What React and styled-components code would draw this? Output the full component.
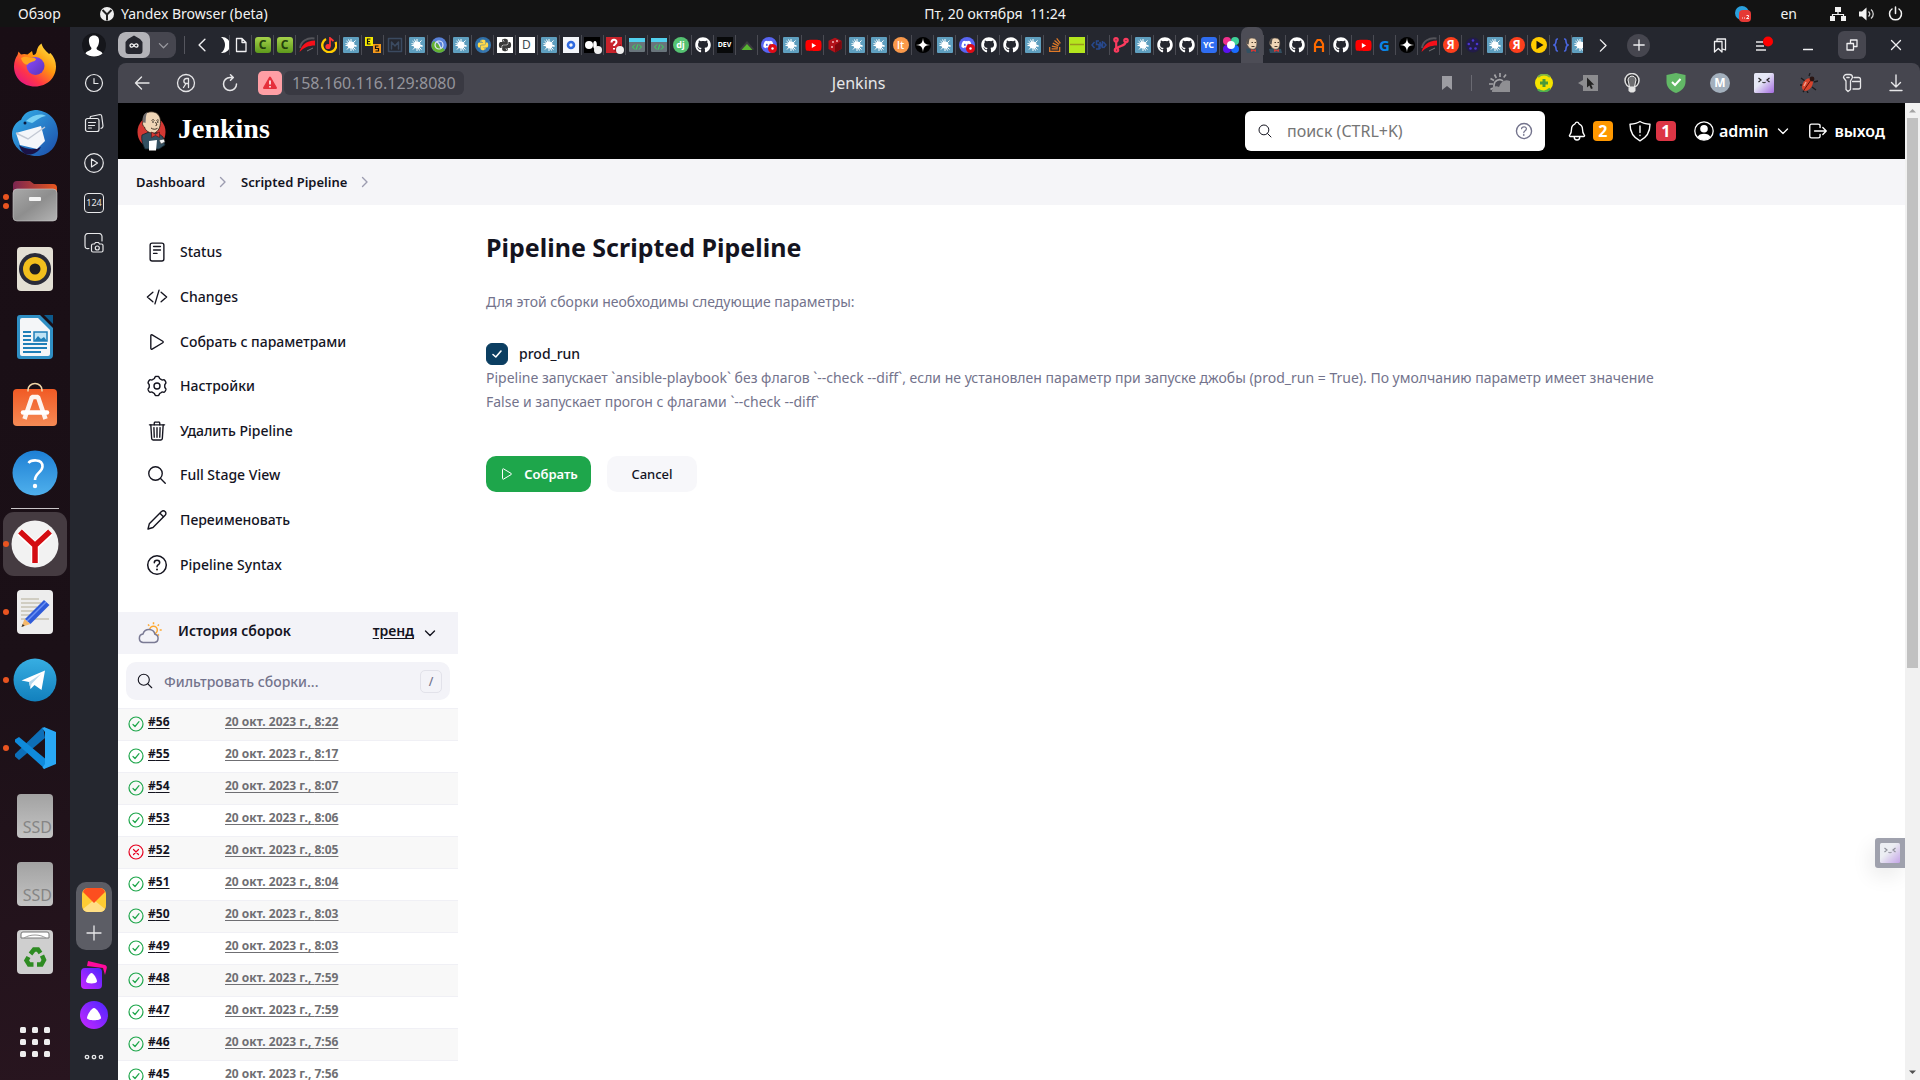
import React from "react";
import styled, { createGlobalStyle, css } from "styled-components";
import { FaGithub, FaYoutube, FaDiscord, FaStackOverflow, FaPython } from "react-icons/fa";
import {
  IoReaderOutline, IoCodeSlashOutline, IoPlayOutline, IoTrashOutline, IoSearchOutline,
  IoHelpCircleOutline, IoNotificationsOutline, IoLogOutOutline,
} from "react-icons/io5";

const UI_FONT = '"Noto Sans", "Open Sans", sans-serif';

const GlobalStyle = createGlobalStyle`
  *, *::before, *::after { box-sizing: border-box; }
  body { margin: 0; font-family: ${UI_FONT}; font-size: 14px; color: #14141f; }
  button, input { font-family: inherit; }
  button { border: 0; padding: 0; background: none; color: inherit; }
  a { color: inherit; text-decoration: none; }
  svg { display: block; flex: none; }
`;

/* ---------- desktop ---------- */

const Desktop = styled.div`
  height: 100vh;
  display: flex;
  flex-direction: column;
  overflow: hidden;
  background: #25272f;
`;

const SystemBar = styled.header`
  flex: none;
  height: 27px;
  display: grid;
  grid-template-columns: 70px 1fr auto 1fr;
  align-items: center;
  background: #131313;
  color: #f2f2f2;
  line-height: 27px;
  white-space: pre;
`;
const Overview = styled.button`
  padding-left: 18px;
  text-align: left;
  font-size: 14px;
  white-space: nowrap;
`;
const ActiveApp = styled.span`
  display: flex;
  align-items: center;
  gap: 7px;
  padding-left: 30px;
`;
const Indicators = styled.div`
  display: flex;
  justify-content: flex-end;
  align-items: center;
  padding-right: 17px;
  gap: 13px;
`;
const Layout = styled.span`
  padding: 0 20px 0 16px;
`;

const Body = styled.div`
  flex: 1;
  min-height: 0;
  display: flex;
`;

const Dock = styled.nav`
  flex: none;
  width: 70px;
  display: flex;
  flex-direction: column;
  justify-content: space-between;
  padding: 4px 0;
  background: linear-gradient(170deg, #190e15 0%, #1b1017 60%, #28151f 100%);
`;
const DockList = styled.div`
  display: flex;
  flex-direction: column;
`;
const DockButton = styled.button`
  height: 68px;
  width: 100%;
  display: grid;
  grid-template-columns: 3px 64px 3px;
  align-items: center;
`;
const DockTile = styled.span`
  grid-column: 2;
  grid-row: 1;
  width: 64px;
  height: 64px;
  border-radius: 11px;
  display: grid;
  place-items: center;
  background: ${(p) => (p.$active ? "#453b41" : "transparent")};
`;
const DockDots = styled.span`
  grid-column: 2;
  grid-row: 1;
  z-index: 1;
  justify-self: start;
  display: flex;
  flex-direction: column;
  gap: 3px;
`;
const Dot = styled.i`
  width: 6px;
  height: 6px;
  border-radius: 3px;
  background: #e95420;
`;
const DockRule = styled.hr`
  width: 48px;
  height: 1px;
  margin: 1px auto;
  border: 0;
  background: #c9c5c7;
`;

/* ---------- browser ---------- */

const BrowserSide = styled.nav`
  flex: none;
  width: 48px;
  display: flex;
  flex-direction: column;
  align-items: center;
  justify-content: space-between;
  color: #e8e8ea;
`;
const SideGroup = styled.div`
  display: flex;
  flex-direction: column;
  align-items: center;
`;
const SideButton = styled.button`
  width: 36px;
  height: ${(p) => p.$h || 40}px;
  display: grid;
  place-items: center;
`;
const SideCard = styled.div`
  width: 36px;
  height: 68px;
  display: flex;
  flex-direction: column;
  align-items: center;
  border-radius: 10px;
  background: #5c5d65;
  margin-bottom: 4px;
`;
const BrowserMain = styled.div`
  flex: 1;
  min-width: 0;
  display: flex;
  flex-direction: column;
`;
const TabBar = styled.div`
  flex: none;
  height: 36px;
  display: flex;
  align-items: center;
  color: #f0f0f2;
`;
const TabGroup = styled.div`
  display: flex;
  width: 58px;
  height: 26px;
  border-radius: 8px;
  overflow: hidden;
  background: #46464f;
`;
const GroupPart = styled.button`
  flex: ${(p) => (p.$main ? "0 0 32px" : "1")};
  display: grid;
  place-items: center;
  border-radius: 7px;
  background: ${(p) => (p.$main ? "#b3b3b8" : "transparent")};
`;
const BarRule = styled.span`
  width: 1px;
  height: 18px;
  margin: 0 9px 0 8px;
  background: #55565e;
`;
const Arrow = styled.button`
  width: 16px;
  height: 24px;
  margin-left: ${(p) => p.$before || 0}px;
  display: grid;
  place-items: center;
`;
const Tabs = styled.div`
  display: flex;
  align-self: stretch;
  align-items: center;
  margin-left: 9px;
  overflow: hidden;
  flex: 0 1 1366px;
`;
const TabButton = styled.button`
  flex: none;
  width: ${(p) => p.$w || 22}px;
  height: 20px;
  display: grid;
  place-items: center;
  justify-content: ${(p) => (p.$clip ? p.$clip : "center")};
  overflow: hidden;
  border-left: 1px solid ${(p) => (p.$bare ? "transparent" : "#4a4b53")};
  ${(p) =>
    p.$active &&
    css`
      height: 36px;
      border-left: 0;
      border-radius: 7px 7px 0 0;
      background: #4d4d56;
    `}
`;
const NewTab = styled.button`
  width: 23px;
  height: 23px;
  margin-left: 16px;
  border-radius: 12px;
  display: grid;
  place-items: center;
  background: #46464f;
`;
const WindowTools = styled.div`
  display: flex;
  margin-left: auto;
  padding-right: 2px;
`;
const ToolButton = styled.button`
  width: 44px;
  height: ${(p) => p.$h || 36}px;
  display: grid;
  place-items: center;
`;
const RestoreFace = styled.span`
  width: 28px;
  height: 28px;
  border-radius: 6px;
  display: grid;
  place-items: center;
  background: #46464f;
`;

const Toolbar = styled.div`
  flex: none;
  height: 40px;
  display: flex;
  align-items: center;
  border-radius: 8px 8px 0 0;
  background: #46464f;
  color: #e6e6e8;
`;
const NavGroup = styled.div`
  display: flex;
  align-items: center;
  flex: 0 0 344px;
  padding-left: 2px;
`;
const Warning = styled.button`
  width: 24px;
  height: 24px;
  margin: 0 2px 0 6px;
  border-radius: 5px;
  display: grid;
  place-items: center;
  background: #ff9fa5;
`;
const Address = styled.button`
  flex: 1;
  height: 24px;
  padding: 0 8px;
  border-radius: 6px;
  background: #393942;
  color: #94949b;
  font-size: 16px;
  line-height: 24px;
  text-align: left;
`;
const PageTitle = styled.div`
  flex: 0 1 790px;
  text-align: center;
  font-size: 16px;
  line-height: 24px;
`;
const Extensions = styled.div`
  display: flex;
  align-items: center;
  margin-left: auto;
  padding-right: 2px;
`;
const ExtRule = styled.span`
  width: 1px;
  height: 16px;
  margin: 0 6px 0 2px;
  background: #6a6a72;
`;

const Viewport = styled.div`
  flex: 1;
  min-height: 0;
  display: flex;
  background: #fff;
`;
const Page = styled.div`
  flex: 1;
  min-width: 0;
  overflow: hidden;
  position: relative;
`;
const Scrollbar = styled.div`
  flex: none;
  width: 15px;
  display: flex;
  flex-direction: column;
  align-items: center;
  justify-content: space-between;
  padding: 5px 0;
  background: #f1f1f1;
`;
const ThumbColumn = styled.div`
  flex: 1;
  width: 11px;
  margin: 5px 0 3px;
`;
const Thumb = styled.div`
  height: 58%;
  background: #c1c1c1;
`;

/* ---------- Jenkins page ---------- */

const JHeader = styled.header`
  height: 56px;
  display: flex;
  align-items: center;
  padding: 0 20px 0 19px;
  background: #000;
  color: #fff;
`;
const Brand = styled.a`
  display: flex;
  align-items: center;
  gap: 12px;
  font: bold 28px/40px "Liberation Serif", serif;
  & > span { margin-bottom: 4px; }
`;
const SearchBox = styled.label`
  width: 300px;
  height: 40px;
  margin: 0 21px 0 auto;
  padding: 0 10px 0 12px;
  display: flex;
  align-items: center;
  gap: 14px;
  border-radius: 6px;
  background: #fff;
  color: #14141f;
`;
const SearchInput = styled.input`
  flex: 1;
  min-width: 0;
  border: 0;
  padding: 0;
  outline: 0;
  background: transparent;
  color: #14141f;
  font-size: ${(p) => p.$size}px;
  font-weight: ${(p) => p.$weight};
  &::placeholder { color: ${(p) => p.$hint}; opacity: 1; }
`;
const HeaderLink = styled.a`
  display: flex;
  align-items: center;
  gap: 5px;
  margin-right: ${(p) => p.$after}px;
  font-size: 16px;
  font-weight: 600;
`;
const MenuArrow = styled.span`
  margin-left: 4px;
`;
const Badge = styled.span`
  width: 20px;
  height: 20px;
  border-radius: 4px;
  text-align: center;
  font-size: 16px;
  font-weight: 700;
  line-height: 20px;
  background: ${(p) => p.$bg};
`;
const Crumbs = styled.nav`
  height: 46px;
  display: flex;
  align-items: center;
  gap: 12px;
  padding-left: 18px;
  background: #f5f5f8;
  font-size: 13px;
  font-weight: 600;
`;

const Columns = styled.div`
  display: flex;
  align-items: flex-start;
`;
const SidePanel = styled.aside`
  flex: none;
  width: 340px;
`;
const Tasks = styled.ul`
  display: grid;
  grid-auto-rows: 1fr;
  min-height: 407px;
  margin: 0;
  padding: 25px 0 25px 28px;
  list-style: none;
`;
const Task = styled.li`
  display: flex;
`;
const TaskLink = styled.a`
  display: flex;
  align-items: center;
  gap: 12px;
  font-size: 14px;
  line-height: 20px;
  font-weight: 500;
`;
const HistoryHead = styled.div`
  height: 42px;
  display: flex;
  align-items: center;
  padding: 0 22px 0 20px;
  background: #f3f3f8;
  font-size: 14px;
  font-weight: 600;
`;
const HistoryTitle = styled.h2`
  margin: 0 auto 4px 16px;
  font-size: 14px;
  line-height: 20px;
  font-weight: 600;
`;
const TrendLink = styled.a`
  margin: 0 10px 4px 0;
  line-height: 20px;
  text-decoration: underline;
  text-underline-offset: 2px;
`;
const Filter = styled.label`
  height: 38px;
  margin: 8px;
  padding: 0 8px 0 10px;
  display: flex;
  align-items: center;
  gap: 10px;
  border-radius: 10px;
  background: #f3f3f8;
`;
const Kbd = styled.kbd`
  width: 22px;
  height: 23px;
  border: 1px solid #e2e2ea;
  border-radius: 5px;
  text-align: center;
  font: 500 12px/21px ${UI_FONT};
  color: #73738c;
`;
const Builds = styled.table`
  width: 100%;
  border-collapse: collapse;
  font-size: 12px;
  font-weight: 700;
`;
const BuildRow = styled.tr`
  height: 32px;
  border-top: 1px solid #f0f0f5;
  background: ${(p) => (p.$odd ? "#f8f8f8" : "#fff")};
`;
const NumberCell = styled.td`
  width: 107px;
  padding: 0 0 2px 10px;
`;
const NumberInner = styled.div`
  display: flex;
  align-items: center;
  gap: 4px;
`;
const DateCell = styled.td`
  padding: 0 0 6px;
`;
const BuildLink = styled.a`
  color: ${(p) => (p.$muted ? "#6f6f73" : "#14141f")};
  text-decoration: underline;
  text-underline-offset: 2px;
  line-height: 20px;
  margin-bottom: ${(p) => (p.$muted ? 0 : 4)}px;
`;

const Main = styled.main`
  flex: 1;
  min-width: 0;
  padding: 27px 240px 40px 28px;
`;
const Title = styled.h1`
  margin: 0;
  font-size: 25px;
  line-height: 30px;
  font-weight: 700;
`;
const Text = styled.p`
  margin: 0;
  padding-top: ${(p) => p.$top || 0}px;
  color: #73738c;
  font-size: 14px;
  line-height: 24px;
  max-width: 1180px;
`;
const CheckRow = styled.label`
  display: flex;
  align-items: center;
  gap: 11px;
  height: 22px;
  margin-top: 29px;
  font-size: 14px;
  line-height: 20px;
  font-weight: 500;
`;
const CheckFace = styled.span`
  display: grid;
  place-items: center;
  width: 22px;
  height: 22px;
  & > * { grid-area: 1 / 1; }
  & > svg { pointer-events: none; }
`;
const Check = styled.input`
  appearance: none;
  width: 22px;
  height: 22px;
  margin: 0;
  border: 1px solid #c5c5d0;
  border-radius: 6px;
  &:checked { border-color: #0b3e61; background: #0b3e61; }
`;
const Actions = styled.div`
  display: flex;
  gap: 16px;
  margin-top: 42px;
`;
const ActionButton = styled.button`
  height: 36px;
  display: flex;
  align-items: center;
  justify-content: center;
  gap: 9px;
  border-radius: 10px;
  font-size: 13px;
  ${(p) =>
    p.$primary
      ? css`width: 105px; background: #1ea64b; color: #fff; font-weight: 600;`
      : css`width: 90px; background: #f7f7fa; color: #14141f; font-weight: 500;`}
`;
const Floating = styled.button`
  position: absolute;
  right: 0;
  bottom: 212px;
  width: 30px;
  height: 30px;
  padding-left: 5px;
  display: flex;
  align-items: center;
  border-radius: 3px 0 0 3px;
  background: #9fa1ad;
  box-shadow: -4px 8px 20px rgba(0, 0, 0, 0.08);
`;

/* ---------- drawings ---------- */

const Art = ({ w, h, box, children, ...rest }) => (
  <svg width={w} height={h || w} viewBox={box || `0 0 ${w} ${h || w}`} fill="none" aria-hidden="true" {...rest}>
    {children}
  </svg>
);
const Line = ({ w, h, box, sw = 1.2, d, children }) => (
  <Art w={w} h={h} box={box} stroke="currentColor" strokeWidth={sw} strokeLinecap="round" strokeLinejoin="round">
    {d && <path d={d} />}
    {children}
  </Art>
);
const Chevron = ({ dir = "down", size = 12, sw = 1.4, color }) => {
  const d = { down: "M1.5 4l4.5 4.5L10.5 4", right: "M3.5 1.5L8 6l-4.500 4.500", left: "M8.500 1L3.500 6l5 5" }[dir];
  return (
    <Art w={size} box="0 0 12 12" stroke={color || "currentColor"} strokeWidth={sw} strokeLinecap="round" strokeLinejoin="round">
      <path d={d} />
    </Art>
  );
};

const gearPath = (() => {
  const pts = [];
  for (let i = 0; i < 144; i += 1) {
    const a = (i / 144) * Math.PI * 2;
    const r = 8.7 + 0.95 * Math.tanh(2.2 * Math.cos(6 * a));
    pts.push(`${(11 + r * Math.sin(a)).toFixed(2)} ${(11 - r * Math.cos(a)).toFixed(2)}`);
  }
  return `M${pts.join("L")}Z`;
})();

const Gear = () => (
  <Line w={22} sw={1.4} d={gearPath}>
    <circle cx="11" cy="11" r="3" />
  </Line>
);
const Pencil = () => (
  <Line w={22} sw={1.4} d="M2 20l1.300-5.200L15.500 2.600a2.400 2.400 0 0 1 3.600 0a2.400 2.400 0 0 1 0 3.600L7 18.500 2 20zM14 4.300l3.600 3.600" />
);

const Jenkins = ({ w, h }) => (
  <Art w={w} h={h} box="0 0 29 40">
    <ellipse cx="14.500" cy="21" rx="14" ry="15.500" fill="#d33833" />
    <path d="M5 24l7-3 9 1 5 4 2 8-6 4H8c-2-4-4-9-3-14z" fill="#335061" stroke="#14232b" strokeWidth=".8" />
    <path d="M6 11C5 4 9 1 14 .8c6-.3 9.500 4 9.500 9.500 0 6-2 10-6 11.700-5 .5-9-2-10-6-1.600-.5-2.600-3.500-1.500-5z" fill="#f0d6b7" stroke="#2b2116" strokeWidth=".8" />
    <path d="M6 11c-1-5 1-8.500 4.500-9.700C8.500 4 9 8 8.500 12z" fill="#6d6b6d" />
    <path d="M14.500 9.500c1-1 2.500-1 3 0M19.500 9.500c.8-.8 1.800-.8 2.300 0M14 17c2 1.600 4.500 1.600 6.500.3M18.500 11l1.500 3-1.500.6" stroke="#2b2116" strokeWidth=".9" />
    <circle cx="16" cy="11" r=".8" fill="#111" /><circle cx="20.800" cy="11" r=".8" fill="#111" />
    <path d="M14.500 21l4 2.200 4-2.200v5.500l-4-2-4 2z" fill="#d33833" stroke="#5a1210" strokeWidth=".6" />
    <path d="M12 30l8-1-1 10.500h-7z" fill="#fff" />
    <path d="M22 29l5-1 1 3-4 2z" fill="#f5f5f5" stroke="#333" strokeWidth=".6" />
  </Art>
);

const Glyph = styled.span`
  width: 16px;
  height: 16px;
  display: grid;
  place-items: center;
  border-radius: ${(p) => p.$r || 0}px;
  background: ${(p) => p.$bg || "transparent"};
  color: ${(p) => p.$fg || "#fff"};
  font: ${(p) => p.$w || 700} ${(p) => p.$s || 10}px/16px ${UI_FONT};
`;

const Favicon = ({ kind }) => {
  switch (kind) {
    case "file":
      return <Line w={16} sw={1.300} d="M3.500 1.500h5.500l4 4v9h-9.500zM9 1.500v4h4" />;
    case "c":
      return <Glyph $bg="linear-gradient(#a5d24a, #5d9a1c)" $fg="#23400c" $r={3} $s={12}>C</Glyph>;
    case "speed":
      return (
        <Art w={16}>
          <path d="M1 11C2 4 8 .5 15.500 1.500" stroke="#55555b" strokeWidth="2" />
          <path d="M.5 15C2 9 7 3.500 16 3.500v5C9.500 8.500 5 10.500.5 15z" fill="#f5101a" />
          <path d="M8 14l6-3" stroke="#777" strokeWidth="1" />
        </Art>
      );
    case "music":
      return (
        <Art w={16}>
          <path d="M5 2A7 7 0 1 0 14.500 5" stroke="#ffcc00" strokeWidth="2.400" />
          <circle cx="7" cy="9.500" r="2.600" fill="#f33" /><path d="M9 9.500V1l3.500 3" stroke="#f33" strokeWidth="1.800" />
        </Art>
      );
    case "splat":
      return (
        <Art w={16}>
          <rect width="16" height="16" rx="1" fill="#5f9fbf" />
          <circle cx="8" cy="8" r="3.600" fill="#fff" />
          <path d="M8 2v12M2.500 8.500h11M3.500 4l9 8.500M4 12.500L12.500 3.500M5.500 2.500l5 11M2.500 6.500l11 3" stroke="#fff" strokeWidth="1" />
        </Art>
      );
    case "es":
      return (
        <Art w={16}>
          <rect width="8" height="9" fill="#f4e800" /><rect x="8" y="7" width="8" height="9" fill="#f79a1c" />
          <path d="M5.500 2H2.500v5h3M2.500 4.500h2.500M13.500 9h-3v2.500h3V14h-3" stroke="#111" strokeWidth="1.200" />
        </Art>
      );
    case "m":
      return <Line w={16} sw={1.500}><path stroke="#3b4a60" d="M1.500 1.500h13v13h-13zM4.500 12V5l3.500 4 3.500-4v7" /></Line>;
    case "clojure":
      return (
        <Art w={16}>
          <circle cx="8" cy="8" r="7.800" fill="#5881d8" /><path d="M1 11a7.800 7.800 0 0 0 13 2L8 8 3 4C.5 6 0 8 1 11z" fill="#63b132" />
          <path d="M4 8a4 4 0 0 1 8 0 4 4 0 0 1-8 0M6 5c3 1 2 4 4 6" stroke="#dfe8f8" strokeWidth="1.200" />
        </Art>
      );
    case "python":
      return <Glyph $bg="linear-gradient(135deg, #2f6fa8 50%, #3f7fb8)" $r={8} $fg="#ffd94a"><FaPython size={12} /></Glyph>;
    case "pythonw":
      return <Glyph $bg="#fff" $fg="#3a3a3a"><FaPython size={14} /></Glyph>;
    case "d":
      return <Glyph $bg="#fff" $fg="#3d4a50" $w={400} $s={12}>D</Glyph>;
    case "o":
      return <Glyph $bg="#f3f5fa"><Art w={10}><circle cx="5" cy="5" r="3" stroke="#2f6ae0" strokeWidth="2.600" /></Art></Glyph>;
    case "medium":
      return (
        <Art w={18} h={18}>
          <rect x="0" y="1" width="16" height="16" fill="#000" /><circle cx="5" cy="9" r="4" fill="#fff" />
          <ellipse cx="11" cy="9" rx="1.800" ry="4" fill="#fff" /><circle cx="14" cy="14" r="4" fill="#eee" />
        </Art>
      );
    case "what":
      return (
        <Art w={18} h={18}>
          <rect y="1" width="16" height="16" fill="#c9232b" /><path d="M8 15L15 8v9z" fill="#8d1218" />
          <path d="M5.500 6.500C5.500 3 10.500 3 10.500 6c0 2-2.500 2-2.500 4M8 12v1.500" stroke="#fff" strokeWidth="2" /><circle cx="14" cy="14" r="4" fill="#eee" />
        </Art>
      );
    case "code":
      return (
        <Art w={16}>
          <rect y="1" width="16" height="14" rx="1" fill="#69757c" /><rect y="1" width="16" height="4" fill="#52d0ee" />
          <path d="M6 7.500L3.500 10 6 12.500M10 7.500l2.500 2.500-2.500 2.500M8.700 7.500l-1.400 5" stroke="#35e05c" strokeWidth="1" />
        </Art>
      );
    case "dj":
      return <Glyph $bg="#55c272" $r={8} $s={9}>dj</Glyph>;
    case "github":
      return <FaGithub size={16} color="#fff" />;
    case "dev":
      return <Glyph $bg="#08090a" $s={7}>DEV</Glyph>;
    case "tri":
      return <Art w={16}><path d="M8 4l7.500 8.500H.5z" fill="#3c3c40" /><path d="M8 7l5.500 6h-11z" fill="#58b431" /></Art>;
    case "discord":
      return (
        <Art w={16}>
          <circle cx="8" cy="8" r="8" fill="#5865f2" />
          <foreignObject x="2" y="2" width="11" height="11"><FaDiscord size={11} color="#fff" /></foreignObject>
          <circle cx="11.500" cy="11.500" r="4.500" fill="#e00b16" /><circle cx="11.500" cy="11.500" r="1.200" fill="#fff" />
        </Art>
      );
    case "youtube":
      return <Glyph $bg="radial-gradient(#fff 30%, transparent 31%)"><FaYoutube size={17} color="#f00" /></Glyph>;
    case "redis":
      return (
        <Art w={16}>
          <path d="M8 .8l6.500 3v8L8 15.500 1.500 12V3.800z" fill="#b3121a" /><path d="M8 8l6.500-4.200v8L8 15.500z" fill="#7d080e" />
          <circle cx="6" cy="5" r="1" fill="#f1b7b9" /><circle cx="10" cy="4" r="1" fill="#f1b7b9" /><circle cx="5" cy="10" r="1" fill="#f1b7b9" />
        </Art>
      );
    case "lt":
      return <Glyph $bg="#f9994b" $r={8} $w={500} $s={11}>lt</Glyph>;
    case "star":
      return <Art w={16}><circle cx="8" cy="8" r="8" fill="#000" /><path d="M8 .8C8.400 6 10 7.600 15.200 8 10 8.400 8.400 10 8 15.200 7.600 10 6 8.400.8 8 6 7.600 7.600 6 8 .8z" fill="#fff" /></Art>;
    case "so":
      return <FaStackOverflow size={16} color="#e07a28" />;
    case "lime":
      return <Glyph $bg="#b4e61e"><Art w={16}><path d="M1 7.500h14" stroke="#9b9a1c" strokeWidth="1.500" /></Art></Glyph>;
    case "sn":
      return <Art w={16} stroke="#27488c" strokeWidth="1.500"><path d="M3.500 5L1 8l2.500 3M12.500 5L15 8l-2.500 3M8 4H5.500v3.500H8V12H5M9 12V5l2.500 6V4" /></Art>;
    case "git":
      return (
        <Art w={16} stroke="#fb3b5e" strokeWidth="2.200">
          <circle cx="3" cy="2.800" r="1.700" /><circle cx="3.500" cy="13" r="1.700" /><circle cx="13" cy="3.500" r="1.700" /><path d="M3.200 4.500v7M12.500 5.500C12 9 7 8.500 4 11" />
        </Art>
      );
    case "yc":
      return <Glyph $bg="#2f6df0" $r={3} $s={9}>YC</Glyph>;
    case "petals":
      return (
        <Art w={16}>
          <circle cx="4" cy="4" r="4" fill="#f0308c" /><circle cx="12" cy="4" r="4" fill="#3fd29a" />
          <circle cx="4" cy="12" r="4" fill="#5a12f0" /><circle cx="12" cy="12" r="4" fill="#1a6cff" /><circle cx="8" cy="8" r="4" fill="#fff" />
        </Art>
      );
    case "jenkins":
      return (
        <Art w={16}>
          <path d="M2 12l5-1 7 1 1 4H3z" fill="#335061" />
          <path d="M3 4C4 .5 11 0 12.500 3.500c.8 3 .3 7-2 8.500-3 .8-6-.5-6.500-3C2.500 8 2.500 5.500 3 4z" fill="#f0d6b7" stroke="#5a5146" strokeWidth=".6" />
          <path d="M3 7C2 3 4 1 6 .8 5 3 5 5 4.600 7.500z" fill="#55504c" /><path d="M7.500 5.500h1.500M10.500 5.500H12M7.500 9.500h3" stroke="#3b2c20" strokeWidth=".9" />
          <path d="M7 12l2.500 1.200L12 12v3l-2.500-1L7 15z" fill="#d33833" />
        </Art>
      );
    case "a":
      return <Art w={16} stroke="#ff6a00" strokeWidth="2.200"><path d="M4 15V7l2.500-4h3L12 7v8M4 10h8" /></Art>;
    case "g":
      return <Glyph $fg="#0a86e8" $s={15}>G</Glyph>;
    case "ya":
      return <Glyph $bg="#fc3f1d" $r={8} $s={12}>Я</Glyph>;
    case "dots":
      return (
        <Art w={16} fill="#3f2fc0">
          <circle cx="8" cy="8" r="7.500" fill="#221c48" /><circle cx="8" cy="3.500" r="1.300" fill="#4a35d0" /><circle cx="3.800" cy="7" r="1.300" fill="#4a35d0" />
          <circle cx="12" cy="7" r="1.300" fill="#4a35d0" /><circle cx="5.500" cy="11.500" r="1.300" fill="#4a35d0" /><circle cx="10.500" cy="11.500" r="1.300" fill="#4a35d0" />
        </Art>
      );
    case "play":
      return <Art w={16}><circle cx="8" cy="8" r="8" fill="#ffcc00" /><path d="M5.500 3.800L12.500 8l-7 4.200z" fill="#111" /></Art>;
    case "braces":
      return <Art w={16} stroke="#4a66e0" strokeWidth="1.600"><path d="M5 2C1.500 1.500 4.500 7 1 8c3.500 1 .5 6.500 4 6M11 2c3.500-.5.500 5 4 6-3.500 1-.5 6.500-4 6" /></Art>;
    case "moon":
      return <Art w={16}><path d="M9 0a8 8 0 0 1 0 16H8a10 10 0 0 0 0-16z" fill="#fff" /></Art>;
    default:
      return null;
  }
};

const TABS = (
  "file c c speed music splat es m splat clojure splat python pythonw d splat o medium what code code dj github dev tri " +
  "discord splat youtube redis splat splat lt star splat discord github github splat so lime sn git splat github github yc petals " +
  "jenkins* jenkins github a github youtube g star speed ya dots splat ya play braces"
).split(" ");

/* dock drawings */
const DOCK = [
  { name: "Firefox", art: (
    <Art w={44} box="0 0 44 44">
      <defs>
        <linearGradient id="ff" x1="1" y1="0" x2=".2" y2="1"><stop offset="0" stopColor="#fff44f" /><stop offset=".45" stopColor="#ff980e" /><stop offset=".75" stopColor="#ff3647" /><stop offset="1" stopColor="#e31587" /></linearGradient>
        <linearGradient id="ffb" x1="0" y1="0" x2="1" y2="1"><stop offset="0" stopColor="#8a4bff" /><stop offset="1" stopColor="#5b34b8" /></linearGradient>
      </defs>
      <path d="M22 43.500C9.500 43.500 1 34.500 1 23.500c0-5 1.500-8.500 3.500-11.500l1-3.500 2.500 3c2-.8 4.500-.8 6.500 0L19 8l1 4c2 0 3-1 3.500-3C24 5 26 2 28.500.5 29.500 5 33 8 36 11l1.500-1c3.500 4 5.500 8 5.500 13.500 0 11-8.500 20-21 20z" fill="url(#ff)" />
      <circle cx="22.500" cy="23" r="9" fill="url(#ffb)" />
      <path d="M8 15c5-3 8 0 12 0 1 0 3 0 3 1.500-2 3-7 2-8 5-4 .5-6-3-7-6.500z" fill="#ffa51f" />
    </Art>) },
  { name: "Thunderbird", art: (
    <Art w={48}>
      <defs><linearGradient id="tb" x1="0" y1="0" x2="1" y2="1"><stop offset="0" stopColor="#35b3ec" /><stop offset="1" stopColor="#1b4ba8" /></linearGradient></defs>
      <path d="M24 1c12 0 23 9 23 23 0 13-9 23-21 23C12 47 1 38 1 25 1 18 6 12 10 11 13 4 17 2 24 1z" fill="url(#tb)" />
      <path d="M8 36c6 4 14 6 22 2-3 6-10 9-16 7-3-2-5-5-6-9z" fill="#1a1346" />
      <path d="M5 24l25-7 4 15-8 8-17-4z" fill="#f4f6fa" /><path d="M5 24l12 6 17-12" stroke="#c3c9d4" strokeWidth="1.500" />
      <path d="M15 12c6-6 14-8 20-5-7 1-10 5-14 7z" fill="#7ad1f4" /><circle cx="14" cy="14" r="1.500" fill="#0b1b40" />
    </Art>) },
  { name: "Files", dots: 2, art: (
    <Art w={46} h={42}>
      <defs><linearGradient id="fl" x1="0" y1="0" x2="1" y2="0"><stop offset="0" stopColor="#7a2550" /><stop offset="1" stopColor="#e8571f" /></linearGradient>
      <linearGradient id="fg" x1="0" y1="0" x2="1" y2="1"><stop offset="0" stopColor="#a9a9a9" /><stop offset=".5" stopColor="#8e8e8e" /><stop offset="1" stopColor="#b4b4b4" /></linearGradient></defs>
      <path d="M1 5a4 4 0 0 1 4-4h13l4 3h19a4 4 0 0 1 4 4v12H1z" fill="url(#fl)" />
      <rect x="1" y="9" width="44" height="32" rx="4" fill="url(#fg)" stroke="#c9c9c9" strokeWidth=".6" />
      <rect x="17" y="17" width="12" height="4" rx="1" fill="#f4f4f4" />
    </Art>) },
  { name: "Rhythmbox", art: (
    <Art w={38} h={46}>
      <rect x="1" y="1" width="36" height="44" rx="4" fill="#e3dfd4" />
      <circle cx="19" cy="23" r="16" fill="#2a2b38" /><circle cx="19" cy="23" r="12" fill="#f2bf1d" /><circle cx="19" cy="23" r="5.500" fill="#1e1e22" />
    </Art>) },
  { name: "LibreOffice Writer", art: (
    <Art w={38} h={46}>
      <path d="M4 1h20l13 13v27a4 4 0 0 1-4 4H4a3 3 0 0 1-3-3V4a3 3 0 0 1 3-3z" fill="#2f8fc4" />
      <path d="M6 4h16l12 12v24a2 2 0 0 1-2 2H6a2 2 0 0 1-2-2V6a2 2 0 0 1 2-2z" fill="#f4f6f8" />
      <path d="M28 1h9v9z" fill="#0d5a8c" />
      <path d="M7 18h8M7 22h8M7 26h8M7 30h24M7 34h24M7 38h18" stroke="#1f7fb8" strokeWidth="2" />
      <rect x="18" y="18" width="13" height="9" fill="#bfe3f5" stroke="#1f7fb8" strokeWidth="1.500" /><path d="M18 27l4-5 3 3 3-2 3 4z" fill="#1f7fb8" />
    </Art>) },
  { name: "Ubuntu Software", art: (
    <Art w={46} h={46}>
      <defs><linearGradient id="us" x1="0" y1="0" x2="0" y2="1"><stop offset="0" stopColor="#f15a24" /><stop offset="1" stopColor="#f58a55" /></linearGradient></defs>
      <rect x="1" y="7" width="44" height="37" rx="4" fill="url(#us)" />
      <path d="M16 9.500V8a7 6.500 0 0 1 14 0v1.500" stroke="#f1d6a8" strokeWidth="1.600" />
      <path d="M12.500 37l7.500-22h6l7.500 22" stroke="#fdf3ee" strokeWidth="4.500" strokeLinejoin="bevel" /><path d="M11 30.500h24" stroke="#fff" strokeWidth="4.500" strokeLinecap="round" />
    </Art>) },
  { name: "Help", art: (
    <Art w={46}>
      <defs><linearGradient id="hp" x1="0" y1="0" x2="0" y2="1"><stop offset="0" stopColor="#1d7fd4" /><stop offset="1" stopColor="#4fb0ec" /></linearGradient></defs>
      <circle cx="23" cy="23" r="22.500" fill="url(#hp)" />
      <path d="M16.500 13c2-3 14-5 14 3.500C30.500 22 23 23 23 30" stroke="#fff" strokeWidth="2.600" /><circle cx="23" cy="36" r="2.200" fill="#fff" />
    </Art>) },
  { name: "Yandex Browser", dots: 1, active: true, rule: true, art: (
    <Art w={48}>
      <circle cx="24" cy="24" r="23.500" fill="#f2f2f2" />
      <path d="M9 12l15 14 15-14M24 25v18" stroke="#fff" strokeWidth="8" /><path d="M9 11.500l15 14 15-14M24 25v18" stroke="#d40d12" strokeWidth="5.500" />
    </Art>) },
  { name: "Text Editor", dots: 1, art: (
    <Art w={38} h={46}>
      <rect x="1" y="1" width="36" height="44" rx="4" fill="#ededed" />
      <path d="M5 10h18M5 14h20M5 18h16M5 22h14M5 26h12M5 30h28" stroke="#c6c2b4" strokeWidth="1.600" />
      <path d="M5.500 38l3-8 6 5z" fill="#f4b76a" /><path d="M9 30L28 11l5.500 5L14.500 35z" fill="#2f5bd8" /><path d="M11 32l19-19" stroke="#6c92f5" strokeWidth="1.500" /><path d="M5.500 38l1.200-3 2 1.800z" fill="#333" />
    </Art>) },
  { name: "Telegram", dots: 1, art: (
    <Art w={44}>
      <defs><linearGradient id="tg" x1="0" y1="0" x2="0" y2="1"><stop offset="0" stopColor="#37aee2" /><stop offset="1" stopColor="#1280bd" /></linearGradient></defs>
      <circle cx="22" cy="22" r="21.500" fill="url(#tg)" />
      <path d="M8.500 22.500L32 12.500l-3.500 19.500-7-5L17.500 31l-1.500-7z" fill="#fff" /><path d="M16 24l12-8-9.500 10-1 5z" fill="#b7d8ec" />
    </Art>) },
  { name: "Visual Studio Code", dots: 1, art: (
    <Art w={44}>
      <path d="M32 12L6 34l-4-3.500v-2.500L30 1z" fill="#0d6fb8" />
      <path d="M2 15.500v-2L6 11l26 21.500V43L2 16z" fill="#0f8adb" /><path d="M31 1l12 5v32l-12 5-1.500-1.500L32 38V6l-2.500-3.500z" fill="#29a8f5" />
    </Art>) },
  { name: "SSD 1", ssd: true },
  { name: "SSD 2", ssd: true },
  { name: "Trash", art: (
    <Art w={38} h={46}>
      <rect x="1" y="1" width="36" height="44" rx="4" fill="#cfcfcf" />
      <path d="M5 9V5a2 2 0 0 1 2-2h24a2 2 0 0 1 2 2v4z" fill="#fff" stroke="#777" strokeWidth="1" /><path d="M8 9c6-4 16-4 22 0" stroke="#999" />
      <g stroke="#2e8b22" strokeWidth="4.500"><path d="M14.500 25l3.500-4.500h4l2.500 3.500" /><path d="M26 26.500l2 4.500-2.500 4.500h-4.500" /><path d="M17.500 35.500H13l-2.500-4 2-3.500" /></g>
    </Art>) },
];
const Ssd = styled.span`
  width: 36px;
  height: 44px;
  padding-right: 1px;
  border-radius: 4px;
  display: flex;
  align-items: flex-end;
  justify-content: flex-end;
  background: linear-gradient(#a2a2a2, #c4c4c4);
  color: #858585;
  font-size: 16px;
  line-height: 22px;
`;

const Face = ({ size = 20, soft }) => (
  <Art w={size} box="0 0 20 20" opacity={soft ? 0.9 : 1}>
    <defs><linearGradient id={soft ? "fc2" : "fc"} x1="0" y1="0" x2="1" y2="1"><stop offset=".4" stopColor={soft ? "#f5f7fb" : "#e6e8f6"} /><stop offset="1" stopColor={soft ? "#c9a6ee" : "#a46be0"} /></linearGradient></defs>
    <rect width="20" height="20" rx="1.500" fill={`url(#${soft ? "fc2" : "fc"})`} />
    <path d="M4.500 5l2.500 2-2.500 2M15.500 5L13 7l2.500 2M8.500 9c.8 1 2.200 1 3 0" stroke={soft ? "#8f9099" : "#222"} strokeWidth="1.200" />
  </Art>
);

const EXTENSIONS = [
  ["Погода", <Art w={22} key="w"><path d="M5 18V13a5.500 5.500 0 0 1 9-4M11 1v4M5.500 2.500l1.800 3.500M1.500 6.500l3.500 2M0 12h4M1.500 17.500L4 16M17 2.500l-2.300 3" stroke="#a3a3a6" strokeWidth="1.700" /><path d="M3 20c0-5 4-7 7-5 2-6 6-8 11-6v11z" fill="#8f8f93" /></Art>],
  ["Добавить", <Art w={18} key="a"><circle cx="9" cy="9" r="9" fill="#f5e400" /><path d="M3 3a8.500 8.500 0 0 1 12 0" stroke="#7cb342" strokeWidth="2" /><path d="M3 15.500a8.500 8.500 0 0 0 12-1" stroke="#4caf50" strokeWidth="2" /><path d="M9 5v8M5 9h8" stroke="#4a9a3a" strokeWidth="3" /></Art>],
  ["Курсор", <Art w={20} h={16} key="c"><path d="M5 0h15v16H5v-5L0 8l5-3z" fill="#8c8c8f" /><path d="M9 2.500v10l2.400-2 1.600 3.500 1.800-.8-1.600-3.400h3z" fill="#222" /></Art>],
  ["Свет", <Art w={18} h={20} key="l"><circle cx="9" cy="7.500" r="7" fill="#2f2f33" stroke="#ddd" strokeWidth="1.500" /><path d="M5.500 9a4 4 0 1 1 7 0l-1 5h-5z" fill="#6d6d70" stroke="#eee" strokeWidth="1" /><path d="M5.500 14.500h7v3.500l-2 1.500h-3l-2-1.500z" fill="#e4e4e4" /></Art>],
  ["Защита", <Art w={20} key="s"><path d="M10 0l9.500 2v7c0 5-4 9-9.500 11C4.500 18 .5 14 .5 9V2z" fill="#62b866" /><path d="M6 9l3 3 5.500-6" stroke="#fff" strokeWidth="2" /></Art>],
  ["M", null],
  ["Лицо", <Face key="f" />],
  ["Жук", <Art w={20} key="b"><path d="M3 5l4 3M2 12h4M5 19l3-4M11 3l1-3M16 9l4-1M14 14l4 3M9 18l1 2" stroke="#1b1b1d" strokeWidth="1.300" /><ellipse cx="9.500" cy="11.500" rx="4.600" ry="7" transform="rotate(35 9.500 11.500)" fill="#d8442c" /><circle cx="14" cy="6" r="2.400" fill="#2a1512" /><path d="M13 7L6 17" stroke="#5b120a" /><path d="M8 9l-2 4" stroke="#f3a08c" strokeWidth="1.500" /></Art>],
  ["Пароли", <Line key="p" w={20} h={20} sw={1.300} d="M1.500 4.500a3 3 0 0 1 3-3h3a3 3 0 0 1 3 3L8.500 8v8.500L6 18.500l-2-2V8zM12 4.500h4.500a2 2 0 0 1 2 2V14a2 2 0 0 1-2 2H11M10.500 8.500h8M4.800 4.500h2.400" />],
  ["Загрузки", <Line key="d" w={14} h={18} sw={1.400} d="M7 1v12M2.500 8.500L7 13l4.500-4.500M1 16.500h12" />],
];
const MBadge = styled.span`
  width: 20px;
  height: 20px;
  border-radius: 10px;
  background: #a3b0bd;
  color: #fff;
  font-size: 12px;
  font-weight: 700;
  line-height: 20px;
  text-align: center;
`;
const CounterBox = styled.span`
  width: 20px;
  height: 20px;
  border: 1px solid #e8e8ea;
  border-radius: 4px;
  font-size: 9px;
  line-height: 18px;
  text-align: center;
`;

const iconSize = { size: 22 };
const TASKS = [
  ["Status", <IoReaderOutline key="i" {...iconSize} />],
  ["Changes", <IoCodeSlashOutline key="i" {...iconSize} />],
  ["Собрать с параметрами", <IoPlayOutline key="i" {...iconSize} />],
  ["Настройки", <Gear key="i" />],
  ["Удалить Pipeline", <IoTrashOutline key="i" {...iconSize} />],
  ["Full Stage View", <IoSearchOutline key="i" {...iconSize} />],
  ["Переименовать", <Pencil key="i" />],
  ["Pipeline Syntax", (
    <Line key="i" w={22} sw={1.5} d="M8.300 8.700C8.300 5.500 13.700 5.500 13.700 8.700c0 2-2.700 2-2.700 4">
      <circle cx="11" cy="11" r="9.300" /><path d="M11 15.400v.2" strokeWidth="2" />
    </Line>
  )],
];
const BUILDS = [
  [56, "8:22"], [55, "8:17"], [54, "8:07"], [53, "8:06"], [52, "8:05", true], [51, "8:04"],
  [50, "8:03"], [49, "8:03"], [48, "7:59"], [47, "7:59"], [46, "7:56"], [45, "7:56"],
];
const Status = ({ failed }) => (
  <Art w={16} stroke={failed ? "#e6001f" : "#1ea64b"} strokeWidth="1.200" strokeLinecap="round" strokeLinejoin="round">
    <circle cx="8" cy="8" r="7" />
    <path d={failed ? "M5.500 5.500l5 5M10.500 5.500l-5 5" : "M5 8.500l2 2 4-4.800"} />
  </Art>
);

export default function App() {
  return (
    <Desktop>
      <GlobalStyle />
      <SystemBar>
        <Overview type="button">Обзор</Overview>
        <ActiveApp>
          <Art w={14}><circle cx="7" cy="7" r="7" fill="#eee" /><path d="M2.500 3L7 7.500 11.500 3M7 7v6.500" stroke="#222" strokeWidth="2" /></Art>
          Yandex Browser (beta)
        </ActiveApp>
        <time>{"Пт, 20 октября  11:24"}</time>
        <Indicators>
          <Art w={16}>
            <circle cx="7" cy="7" r="7" fill="#2a9fdc" /><rect x="4" y="4" width="12" height="12" rx="4" fill="#e53935" />
            <path d="M7 12h1M9 12h1M11.500 9.500h2v1.500l-2 1.500h2.500" stroke="#fff" strokeWidth=".9" />
          </Art>
          <Layout>en</Layout>
          <Art w={16} h={14}><path d="M5 0h6v5H5zM0 9h5v5H0zM11 9h5v5h-5z" fill="#f2f2f2" /><path d="M8 5v2.500M2.500 10V7.500h11V10" stroke="#f2f2f2" strokeWidth="1.200" /></Art>
          <Art w={16} h={14}><path d="M0 4.500h3L7.500.500v13L3 9.500H0z" fill="#f2f2f2" /><path d="M9.500 4.500c1.500 1.500 1.500 3.500 0 5M12 2.500c3 2.500 3 6.500 0 9" stroke="#d0d0d0" strokeWidth="1.300" /></Art>
          <Art w={15} h={15} stroke="#f2f2f2" strokeWidth="1.500" strokeLinecap="round"><path d="M7.500 1v6.500M4 3a6 6 0 1 0 7 0" /></Art>
        </Indicators>
      </SystemBar>

      <Body>
        <Dock>
          <DockList>
            {DOCK.map((d) => (
              <React.Fragment key={d.name}>
                {d.rule && <DockRule />}
                <DockButton type="button" aria-label={d.name}>
                  <DockTile $active={d.active}>{d.ssd ? <Ssd>SSD</Ssd> : d.art}</DockTile>
                  {d.dots && <DockDots>{Array.from({ length: d.dots }, (_, i) => <Dot key={i} />)}</DockDots>}
                </DockButton>
              </React.Fragment>
            ))}
          </DockList>
          <DockButton type="button" aria-label="Приложения">
            <DockTile>
              <Art w={30}>
                {[0, 12, 24].map((y) => [0, 12, 24].map((x) => <rect key={`${x}-${y}`} x={x} y={y} width="6" height="6" rx="1.500" fill="#eee" />))}
              </Art>
            </DockTile>
          </DockButton>
        </Dock>

        <BrowserSide>
          <SideGroup>
            <SideButton type="button" aria-label="Профиль" $h={36}>
              <Art w={24}><circle cx="12" cy="12" r="12" fill="#15161b" /><path d="M12 2.500c4 0 5.500 3 5 6.500-.3 3-1.500 5-2.500 6 0 3 5 2.500 6 5.500-4 4-13 4-17 0 1-3 6-2.500 6-5.500-1-1-2.200-3-2.500-6-.5-3.500 1-6.500 5-6.500z" fill="#fff" /></Art>
            </SideButton>
            <SideButton type="button" aria-label="История"><Line w={20} d="M10 5.500V10.500h4"><circle cx="10" cy="10" r="8.500" /></Line></SideButton>
            <SideButton type="button" aria-label="Коллекции"><Line w={20} d="M6 5l.5-1.500L16 1.500c1 0 1.500.5 1.700 1.500L19 13c0 1-.5 2-2 2.300M1.500 7.500a2 2 0 0 1 2-2H13a2 2 0 0 1 2 2V16.500a2 2 0 0 1-2 2H3.500a2 2 0 0 1-2-2zM4.500 9.500h7M4.500 12.500h6M4.500 15h3" /></SideButton>
            <SideButton type="button" aria-label="Видео"><Line w={20} d="M7.500 6v8l6-4z"><circle cx="10" cy="10" r="9.300" /></Line></SideButton>
            <SideButton type="button" aria-label="Вкладки"><CounterBox>124</CounterBox></SideButton>
            <SideButton type="button" aria-label="Снимок экрана"><Line w={20} d="M5 15.500c-3 .5-4-.5-4-3V3.500a3 3 0 0 1 3-3h11a3 3 0 0 1 3 3V8M7.500 12.500a1.500 1.500 0 0 1 1.500-1.500h1.500l1-1.500h3l1 1.500H17.500a1.500 1.500 0 0 1 1.500 1.500V17.500a1.500 1.500 0 0 1-1.500 1.500H9a1.500 1.500 0 0 1-1.500-1.500z"><circle cx="13.300" cy="15" r="2" /></Line></SideButton>
          </SideGroup>
          <SideGroup>
            <SideCard>
              <SideButton type="button" aria-label="Почта" $h={36}>
                <Art w={24}><rect width="24" height="24" rx="6" fill="#ffcc33" /><path d="M1 21L12 12l11 9c-1 2-3 3-5 3H6c-2 0-4-1-5-3z" fill="#ffdf85" /><path d="M1 4c1-3 3-4 5-4h12c2 0 4 1 5 4L12 15z" fill="#fc4f1f" /></Art>
              </SideButton>
              <SideButton type="button" aria-label="Добавить" $h={30}><Line w={16} sw={1.300} d="M8 1v14M1 8h14" /></SideButton>
            </SideCard>
            <SideButton type="button" aria-label="Алиса про" $h={42}>
              <Art w={26} h={28}>
                <defs><linearGradient id="al" x1="0" y1="1" x2="1" y2="0"><stop offset="0" stopColor="#c926ff" /><stop offset="1" stopColor="#4a26ff" /></linearGradient></defs>
                <path d="M7 0l17 4c1.500.5 2 1.500 1.800 3L24 14l-2-7L6 5z" fill="#ff0a9c" /><rect y="7" width="21" height="21" rx="4" fill="url(#al)" />
                <path d="M10.500 12c2 0 5.500 6 5.500 8.500S5 23 5 20.500 8.500 12 10.500 12z" fill="#fff" />
              </Art>
            </SideButton>
            <SideButton type="button" aria-label="Алиса" $h={38}>
              <Art w={28}><circle cx="14" cy="14" r="14" fill="url(#al)" /><path d="M14 7c2.500 0 7 7 7 10s-14 3-14 0S11.500 7 14 7z" fill="#fff" /></Art>
            </SideButton>
            <SideButton type="button" aria-label="Ещё" $h={46}><Line w={20} h={6} sw={1.300}><circle cx="3" cy="3" r="1.700" /><circle cx="10" cy="3" r="1.700" /><circle cx="17" cy="3" r="1.700" /></Line></SideButton>
          </SideGroup>
        </BrowserSide>

        <BrowserMain>
          <TabBar>
            <TabGroup>
              <GroupPart type="button" $main aria-label="Группа вкладок">
                <Art w={18} h={20}><path d="M3 4l6-3.500L15 4l2.500 3v9a3 3 0 0 1-3 3h-11a3 3 0 0 1-3-3V7z" fill="#26272f" /><path d="M9 10.500c-1.500-2.500-4-2-4 0s2.500 2.500 4 0 4-2 4 0-2.500 2.500-4 0z" stroke="#fff" strokeWidth="1.300" /></Art>
              </GroupPart>
              <GroupPart type="button" aria-label="Список групп"><Chevron size={11} color="#9a9aa0" /></GroupPart>
            </TabGroup>
            <BarRule />
            <Arrow type="button" aria-label="Назад по вкладкам"><Chevron dir="left" size={14} sw={1.200} /></Arrow>
            <Tabs>
              <TabButton type="button" $bare $w={10} $clip="end" aria-label="moon"><Favicon kind="moon" /></TabButton>
              {TABS.map((t, i) => {
                const active = t.endsWith("*");
                const kind = t.replace("*", "");
                return <TabButton type="button" key={i} $active={active} aria-label={kind}><Favicon kind={kind} /></TabButton>;
              })}
              <TabButton type="button" $w={12} $clip="start" aria-label="splat"><Favicon kind="splat" /></TabButton>
            </Tabs>
            <Arrow type="button" aria-label="Вперёд по вкладкам" $before={10}><Chevron dir="right" size={15} sw={1.100} /></Arrow>
            <NewTab type="button" aria-label="Новая вкладка"><Line w={12} sw={1.300} d="M6 .8v10.400M.8 6h10.400" /></NewTab>
            <WindowTools>
              <ToolButton type="button" aria-label="Закладки"><Line w={14} h={15} sw={1.300} d="M1.500 3.500h7.500V14l-3.700-3.500L1.500 14zM4 3.500V1h8.500v11L9.500 11" /></ToolButton>
              <ToolButton type="button" aria-label="Меню">
                <Art w={18} h={18}><path d="M1 6h7M1 10h8M1 14h10" stroke="#e6e6e8" strokeWidth="1.300" /><circle cx="13" cy="5.500" r="5" fill="#f00" /></Art>
              </ToolButton>
              <ToolButton type="button" aria-label="Свернуть"><Line w={10} h={12} sw={1.300} d="M.5 10.500h9" /></ToolButton>
              <ToolButton type="button" aria-label="Восстановить"><RestoreFace><Line w={12} sw={1.300} d="M1 4.500h6.500V11H1zM4.500 4.500V1H11v6.500H7.500" /></RestoreFace></ToolButton>
              <ToolButton type="button" aria-label="Закрыть"><Line w={12} sw={1.300} d="M1.500 1.500l9 9M10.500 1.500l-9 9" /></ToolButton>
            </WindowTools>
          </TabBar>

          <Toolbar>
            <NavGroup>
              <ToolButton type="button" aria-label="Назад"><Line w={16} sw={1.400} d="M15 8H1.500M7.500 2L1.500 8l6 6" /></ToolButton>
              <ToolButton type="button" aria-label="Яндекс"><Line w={20} sw={1.300}><circle cx="10" cy="10" r="8.500" /><path d="M12.500 14.500v-9H10.500c-3.500 0-3.500 5 0 5h2M10 10.500l-2.500 4" /></Line></ToolButton>
              <ToolButton type="button" aria-label="Обновить"><Line w={16} h={18} sw={1.500} d="M14.500 10a6.500 6.500 0 1 1-6.500-6.500h3M8.500.8L11.300 3.500 8.500 6.200" /></ToolButton>
              <Warning type="button" aria-label="Небезопасно"><Art w={14}><path d="M7 1.500l6 10.500H1z" fill="#e5303c" stroke="#e5303c" strokeWidth="2" strokeLinejoin="round" /><path d="M7 4.500v4M7 10v1.500" stroke="#fff" strokeWidth="1.500" /></Art></Warning>
              <Address type="button">158.160.116.129:8080</Address>
            </NavGroup>
            <PageTitle>Jenkins</PageTitle>
            <Extensions>
              <ToolButton type="button" aria-label="В закладки"><Art w={10} h={14}><path d="M0 0h10v14l-5-4-5 4z" fill="#9c9ca2" /></Art></ToolButton>
              <ExtRule />
              {EXTENSIONS.map(([name, art]) => (
                <ToolButton type="button" key={name} aria-label={name}>{art || <MBadge>M</MBadge>}</ToolButton>
              ))}
            </Extensions>
          </Toolbar>

          <Viewport>
            <Page>
              <JHeader>
                <Brand href="#"><Jenkins w={29} h={40} /><span>Jenkins</span></Brand>
                <SearchBox>
                  <IoSearchOutline size={16} />
                  <SearchInput type="text" placeholder="поиск (CTRL+K)" $size={16} $weight={400} $hint="#757575" />
                  <IoHelpCircleOutline size={22} color="#73738c" />
                </SearchBox>
                <HeaderLink href="#" $after={16}><IoNotificationsOutline size={22} /><Badge $bg="#ff9800">2</Badge></HeaderLink>
                <HeaderLink href="#" $after={18}>
                  <Line w={22} sw={1.400} d="M11 1.500C8 3.500 4.500 4 1 4.200 1 12 4.500 17.500 11 20.800 17.500 17.500 21 12 21 4.200 17.500 4 14 3.500 11 1.500zM11 6v6.500M11 15.200v.3" />
                  <Badge $bg="#dc3545">1</Badge>
                </HeaderLink>
                <HeaderLink href="#" $after={18}>
                  <Art w={20}><circle cx="10" cy="10" r="9.200" stroke="#fff" strokeWidth="1.300" /><circle cx="10" cy="7.800" r="3.800" fill="#fff" /><path d="M3.500 16c1.500-4.500 11.500-4.500 13 0-3 4-10 4-13 0z" fill="#fff" /></Art>
                  admin
                  <MenuArrow><Chevron size={12} sw={1.300} /></MenuArrow>
                </HeaderLink>
                <HeaderLink href="#" $after={0}><IoLogOutOutline size={22} />выход</HeaderLink>
              </JHeader>

              <Crumbs>
                <a href="#">Dashboard</a>
                <Chevron dir="right" size={12} color="#9c9cb0" />
                <a href="#">Scripted Pipeline</a>
                <Chevron dir="right" size={12} color="#9c9cb0" />
              </Crumbs>

              <Columns>
                <SidePanel>
                  <Tasks>
                    {TASKS.map(([label, icon]) => (
                      <Task key={label}><TaskLink href="#">{icon}{label}</TaskLink></Task>
                    ))}
                  </Tasks>
                  <HistoryHead>
                    <Art w={24} h={22}>
                      <circle cx="15.500" cy="8" r="3.800" stroke="#fea82f" strokeWidth="1.500" />
                      <path d="M15.500.3v2M21 2.500l-1.300 1.300M23.700 8h-2M10 2.500l1.300 1.300M21 13.500l-1.300-1.300" stroke="#fea82f" strokeWidth="1.500" />
                      <path d="M5 20.500a4.300 4.300 0 0 1 0-8.500 6.200 6.200 0 0 1 12 .3 4.200 4.200 0 0 1-.5 8.200z" fill="#f3f3f8" stroke="#7a7a94" strokeWidth="1.500" />
                    </Art>
                    <HistoryTitle>История сборок</HistoryTitle>
                    <TrendLink href="#">тренд</TrendLink>
                    <Chevron />
                  </HistoryHead>
                  <Filter>
                    <IoSearchOutline size={18} />
                    <SearchInput type="text" placeholder="Фильтровать сборки..." $size={14} $weight={500} $hint="#73738c" />
                    <Kbd>/</Kbd>
                  </Filter>
                  <Builds>
                    <tbody>
                      {BUILDS.map(([n, time, failed], i) => (
                        <BuildRow key={n} $odd={i % 2 === 0}>
                          <NumberCell><NumberInner><Status failed={failed} /><BuildLink href="#">#{n}</BuildLink></NumberInner></NumberCell>
                          <DateCell><BuildLink href="#" $muted>20 окт. 2023 г., {time}</BuildLink></DateCell>
                        </BuildRow>
                      ))}
                    </tbody>
                  </Builds>
                </SidePanel>

                <Main>
                  <Title>Pipeline Scripted Pipeline</Title>
                  <Text $top={28}>Для этой сборки необходимы следующие параметры:</Text>
                  <CheckRow>
                    <CheckFace>
                      <Check type="checkbox" defaultChecked />
                      <Line w={12} sw={1.600}><path stroke="#fff" d="M2 6.500L4.800 9 10 3" /></Line>
                    </CheckFace>
                    prod_run
                  </CheckRow>
                  <Text $top={1}>
                    Pipeline запускает `ansible-playbook` без флагов `--check --diff`, если не установлен параметр при запуске джобы (prod_run = True). По умолчанию параметр имеет значение False и запускает прогон с флагами `--check --diff`
                  </Text>
                  <Actions>
                    <ActionButton type="button" $primary><IoPlayOutline size={16} />Собрать</ActionButton>
                    <ActionButton type="button">Cancel</ActionButton>
                  </Actions>
                </Main>
              </Columns>

              <Floating type="button" aria-label="Помощник"><Face soft /></Floating>
            </Page>
            <Scrollbar>
              <Art w={7} h={5}><path d="M0 4.500L3.500 1 7 4.500z" fill="#a3a3a3" /></Art>
              <ThumbColumn><Thumb /></ThumbColumn>
              <Art w={7} h={5}><path d="M0 .5h7L3.500 4z" fill="#505050" /></Art>
            </Scrollbar>
          </Viewport>
        </BrowserMain>
      </Body>
    </Desktop>
  );
}
